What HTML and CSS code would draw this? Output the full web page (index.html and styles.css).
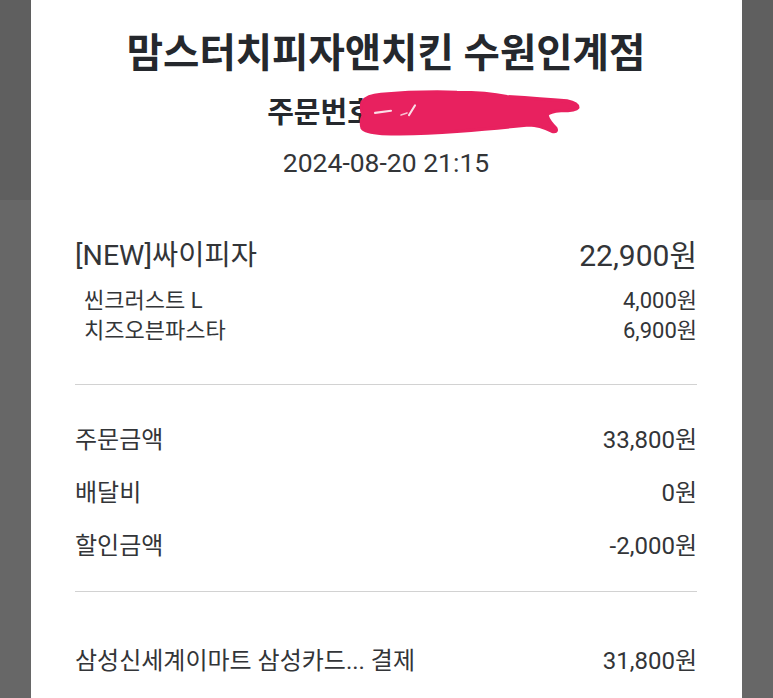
FILE: index.html
```html
<!DOCTYPE html>
<html lang="ko">
<head>
<meta charset="utf-8">
<link rel="stylesheet" href="styles.css">
</head>
<body>
<div class="page">
  <main class="card">
    <h1 class="title">맘스터치피자앤치킨 수원인계점</h1>
    <div class="order">
      <span class="order-label">주문번호</span>
      <svg class="scribble" width="225" height="50" viewBox="0 0 225 46" preserveAspectRatio="none" aria-hidden="true">
        <path d="M5 12 Q10 6 24 5 Q60 2 100 3 Q130 3 150 7 Q185 9 210 11 Q221 13 221 17 Q219 20 204 20 Q192 21 190 24 Q192 30 199 36 Q201 40 195 39 Q182 33 172 33 Q140 36 100 39 Q60 42 25 41 Q8 40 5 36 Q3 30 6 24 Q3 18 5 12 Z" fill="#e8215f" stroke="#e8215f" stroke-width="3" stroke-linejoin="round"/>
        <path d="M18 22 L34 20" stroke="#ffffff" stroke-width="2" stroke-linecap="round" opacity="0.85"/>
        <path d="M52 24 L58 15" stroke="#ffffff" stroke-width="2" stroke-linecap="round" opacity="0.85"/>
        <path d="M44 24 L50 22" stroke="#ffffff" stroke-width="1.5" stroke-linecap="round" opacity="0.7"/>
      </svg>
    </div>
    <div class="date">2024-08-20 21:15</div>

    <section class="items">
      <div class="row item">
        <span class="item-name">[NEW]싸이피자</span>
        <span class="item-price">22,900원</span>
      </div>
      <div class="row option">
        <span>씬크러스트 L</span>
        <span>4,000원</span>
      </div>
      <div class="row option">
        <span>치즈오븐파스타</span>
        <span>6,900원</span>
      </div>
    </section>

    <hr class="divider first">

    <section class="summary">
      <div class="row sum">
        <span>주문금액</span>
        <span>33,800원</span>
      </div>
      <div class="row sum">
        <span>배달비</span>
        <span>0원</span>
      </div>
      <div class="row sum">
        <span>할인금액</span>
        <span>-2,000원</span>
      </div>
    </section>

    <hr class="divider second">

    <div class="row sum pay">
      <span>삼성신세계이마트 삼성카드... 결제</span>
      <span>31,800원</span>
    </div>
  </main>
</div>
</body>
</html>
```

FILE: styles.css
```css
html, body {
  margin: 0;
  padding: 0;
}

body {
  background: linear-gradient(#5f5f5f 0, #5f5f5f 200px, #676767 200px, #676767 100%);
  font-family: Roboto, "Noto Sans CJK KR", sans-serif;
  color: #333538;
  height: 698px;
  overflow: hidden;
}

.page {
  display: flex;
  justify-content: center;
  padding: 0 31px;
  height: 698px;
}

.card {
  flex: 1;
  background: #ffffff;
  padding: 32px 45px 0 44px;
  box-sizing: border-box;
}

.title {
  margin: 0;
  text-align: center;
  font-size: 39.5px;
  line-height: 44px;
  font-weight: 700;
  color: #25282d;
  white-space: nowrap;
}

.order {
  margin-top: 17px;
  height: 40px;
  display: flex;
  justify-content: center;
  align-items: center;
}

.order-label {
  font-size: 29px;
  line-height: 40px;
  font-weight: 700;
  color: #25282d;
}

.scribble {
  display: block;
  align-self: flex-start;
  margin-top: -4px;
  margin-left: -17px;
  margin-right: -77px;
}

.date {
  margin-top: 13px;
  text-align: center;
  font-size: 26.5px;
  line-height: 34px;
  color: #333538;
}

.items {
  margin-top: 58px;
}

.row {
  display: flex;
  justify-content: space-between;
  align-items: center;
}

.item {
  line-height: 36px;
  margin-bottom: 12px;
}

.item-name {
  font-size: 28.5px;
}

.item-price {
  font-size: 30px;
}

.option {
  font-size: 22px;
  line-height: 30px;
  padding-left: 9px;
}

.divider {
  border: 0;
  height: 1px;
  background: #d2d2d2;
  margin: 0;
}

.divider.first {
  margin-top: 38px;
}

.summary {
  margin-top: 38px;
  display: flex;
  flex-direction: column;
  gap: 19px;
}

.sum {
  font-size: 24px;
  line-height: 34px;
}

.divider.second {
  margin-top: 28px;
}

.pay {
  margin-top: 52px;
}
```
